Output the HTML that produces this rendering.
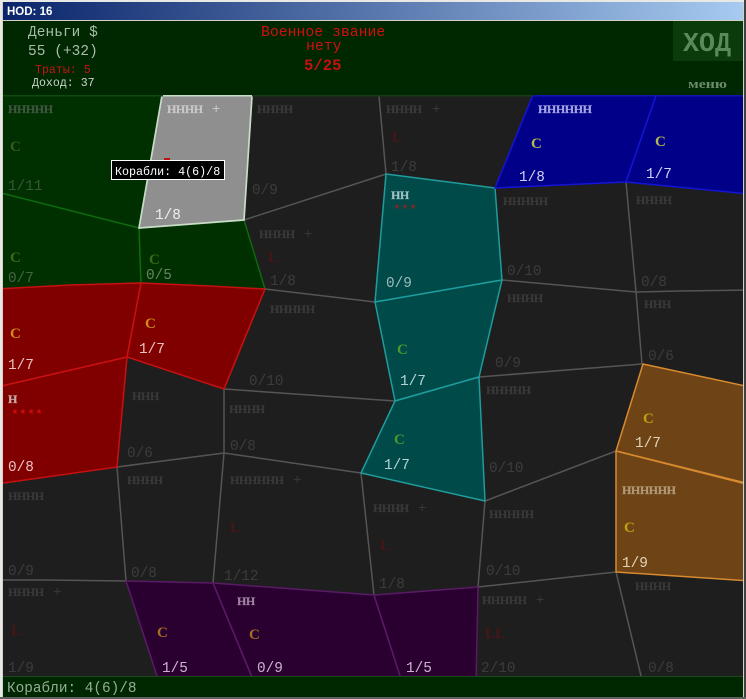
<!DOCTYPE html>
<html><head><meta charset="utf-8"><style>
html,body{margin:0;padding:0;background:#d4d0c8;width:746px;height:699px;overflow:hidden}
svg{display:block}
text{white-space:pre}
.m{font-family:"Liberation Mono",monospace;font-size:14.4px}
.h{font-family:"Liberation Serif",serif;font-weight:bold;font-size:12px;letter-spacing:-.4px;fill:#383838;stroke:#383838;stroke-width:.25px}
.c{font-family:"Liberation Serif",serif;font-weight:bold;font-size:15px}
.l{font-family:"Liberation Serif",serif;font-weight:bold;font-size:15px;fill:#481616}
.p{font-family:"Liberation Mono",monospace;font-size:14px;fill:#383838}
</style></head><body>
<svg width="746" height="699" viewBox="0 0 746 699" xmlns="http://www.w3.org/2000/svg">
<defs>
<linearGradient id="t" x1="0" x2="1" y1="0" y2="0"><stop offset="0" stop-color="#0a246a"/><stop offset="1" stop-color="#a6caf0"/></linearGradient>
<clipPath id="mapclip"><rect x="3" y="96" width="740" height="581"/></clipPath>
</defs>
<rect width="746" height="699" fill="#d4d0c8"/>
<rect x="0" y="0" width="746" height="2" fill="#e8e8e4"/>
<rect x="0" y="0" width="2" height="699" fill="#e8e8e4"/>
<rect x="744" y="0" width="2" height="699" fill="#404040"/>
<rect x="0" y="697" width="746" height="2" fill="#606060"/>
<rect x="3" y="2" width="740" height="18" fill="url(#t)"/>
<text x="7" y="15" font-family="Liberation Sans,sans-serif" font-weight="bold" font-size="11.5" fill="#fff">HOD: 16</text>
<rect x="3" y="21" width="740" height="74" fill="#002800"/>
<rect x="3" y="95" width="740" height="582" fill="#1e1e1e"/>

<g stroke-width="1.5" stroke-linejoin="round" clip-path="url(#mapclip)">
<g fill="#003000" stroke="#0d6a0d">
<polygon points="-3,90 163,90 163,96 139,228 -3,192"/>
<polygon points="-3,192 139,228 141,283 -3,289"/>
<polygon points="139,228 244,220 265,289 141,283"/>
</g>
<g fill="none" stroke="#555">
<polyline points="252,96 244,220 386,174 379,96"/>
<polyline points="265,289 375,302"/>
<polyline points="224,389 395,401"/>
<polyline points="224,389 224,453 117,467"/>
<polyline points="224,453 361,473 374,595"/>
<polyline points="224,453 213,583"/>
<polyline points="117,467 126,581"/>
<polyline points="3,580 45,580 126,581"/>
<polyline points="502,280 636,292 680,291 750,290"/>
<polyline points="626,182 636,292 642,364"/>
<polyline points="479,377 642,364"/>
<polyline points="485,501 616,451"/>
<polyline points="485,501 478,587"/>
<polyline points="478,587 616,572 642,680"/>
</g>
<g fill="#800000" stroke="#c81010">
<polygon points="-3,387 127,357 117,467 -3,484"/>
<polygon points="-3,289 70,285 141,283 127,357 -3,387"/>
<polygon points="141,283 210,286 265,289 224,389 127,357"/>
</g>
<g fill="#2a0030" stroke="#5a1a66">
<polygon points="126,581 213,583 254,682 159,682"/>
<polygon points="213,583 374,595 402,682 254,682"/>
<polygon points="374,595 478,587 476,682 402,682"/>
</g>
<g fill="#004a4a" stroke="#1f9c9c">
<polygon points="386,174 495,188 502,280 375,302"/>
<polygon points="375,302 502,280 479,377 395,401"/>
<polygon points="395,401 479,377 485,501 361,473"/>
</g>
<g fill="#000088" stroke="#1414d8">
<polygon points="535,90 658,90 626,182 495,188"/>
<polygon points="658,90 750,90 750,194 626,182"/>
</g>
<g fill="#6e4416" stroke="#d88a30">
<polygon points="643,364 750,387 750,484 616,451"/>
<polygon points="616,451 750,485 750,581 616,572"/>
</g>
<polygon points="163,90 252,90 252,96 244,220 139,228" fill="#8f8f8f" stroke="#c8dcc8" stroke-width="1.7"/>
</g>
<rect x="3" y="95" width="160" height="1.5" fill="#0d4a0d"/>
<rect x="163" y="95" width="89" height="1.5" fill="#c8dcc8"/>
<rect x="252" y="95" width="281" height="1.5" fill="#1a3a1a"/>
<rect x="533" y="95" width="210" height="1.5" fill="#1414b0"/>

<!-- header -->
<rect x="673" y="21" width="70" height="40" fill="#0b3a0b"/>
<text x="683" y="51" font-family="Liberation Mono,monospace" font-weight="bold" font-size="27" textLength="48" lengthAdjust="spacingAndGlyphs" fill="#5a8a5a">ХОД</text>
<text x="688" y="88" font-family="Liberation Serif,serif" font-weight="bold" font-size="13" textLength="39" lengthAdjust="spacingAndGlyphs" fill="#6a8a6a">меню</text>
<text x="28" y="36" class="m" fill="#a8bca8" letter-spacing=".1">Деньги $</text>
<text x="28" y="55" class="m" fill="#a8bca8" letter-spacing=".1">55 (+32)</text>
<text x="35" y="73" font-family="Liberation Mono,monospace" font-size="11.6" fill="#c81414">Траты: 5</text>
<text x="32" y="86" font-family="Liberation Mono,monospace" font-size="11.6" fill="#c8d4c8">Доход: 37</text>
<text x="261" y="36" font-family="Liberation Mono,monospace" font-size="14.8" fill="#d01010">Военное звание</text>
<text x="306" y="50" font-family="Liberation Mono,monospace" font-size="14.8" fill="#d01010">нету</text>
<text x="304" y="70" font-family="Liberation Mono,monospace" font-weight="bold" font-size="15.6" fill="#c81010">5/25</text>

<!-- H labels -->
<text x="8" y="113" class="h" style="fill:#3f553f;stroke:#3f553f">ННННН</text>
<text x="167" y="113" class="h" style="fill:#c8c8c8;stroke:#c8c8c8">НННН</text>
<text x="257" y="113" class="h">НННН</text>
<text x="386" y="113" class="h">НННН</text>
<text x="538" y="113" class="h" style="fill:#a4a4e4;stroke:#a4a4e4">НННННН</text>
<text x="391" y="199" class="h" style="fill:#9cc0c0;stroke:#9cc0c0">НН</text>
<text x="503" y="205" class="h">ННННН</text>
<text x="636" y="204" class="h">НННН</text>
<text x="259" y="238" class="h">НННН</text>
<text x="270" y="313" class="h">ННННН</text>
<text x="507" y="302" class="h">НННН</text>
<text x="644" y="308" class="h">ННН</text>
<text x="132" y="400" class="h">ННН</text>
<text x="229" y="413" class="h">НННН</text>
<text x="8" y="403" class="h" style="fill:#c8a8a8;stroke:#c8a8a8">Н</text>
<text x="486" y="394" class="h">ННННН</text>
<text x="127" y="484" class="h">НННН</text>
<text x="230" y="484" class="h">НННННН</text>
<text x="8" y="500" class="h">НННН</text>
<text x="373" y="512" class="h">НННН</text>
<text x="489" y="518" class="h">ННННН</text>
<text x="622" y="494" class="h" style="fill:#b09878;stroke:#b09878">НННННН</text>
<text x="635" y="590" class="h">НННН</text>
<text x="8" y="596" class="h">НННН</text>
<text x="237" y="605" class="h" style="fill:#a080a0;stroke:#a080a0">НН</text>
<text x="482" y="604" class="h">ННННН</text>
<!-- plus -->
<text x="212" y="113" class="p" style="fill:#c8c8c8">+</text>
<text x="432" y="113" class="p">+</text>
<text x="304" y="238" class="p">+</text>
<text x="293" y="484" class="p">+</text>
<text x="418" y="512" class="p">+</text>
<text x="53" y="596" class="p">+</text>
<text x="536" y="604" class="p">+</text>
<!-- stars -->
<text x="393" y="214" font-family="Liberation Mono,monospace" font-size="13.4" fill="#a02020">***</text>
<text x="11" y="419" font-family="Liberation Mono,monospace" font-size="13.4" fill="#e01010">****</text>

<!-- C labels -->
<text x="10" y="151" class="c" fill="#3a5a1a">С</text>
<text x="10" y="262" class="c" fill="#3a6a1a">С</text>
<text x="149" y="264" class="c" fill="#3a6a1a">С</text>
<text x="10" y="338" class="c" fill="#d08a20">С</text>
<text x="145" y="328" class="c" fill="#d08a20">С</text>
<text x="531" y="148" class="c" fill="#b8b850">С</text>
<text x="655" y="146" class="c" fill="#b8b850">С</text>
<text x="397" y="354" class="c" fill="#4a9a2a">С</text>
<text x="394" y="444" class="c" fill="#4a9a2a">С</text>
<text x="643" y="423" class="c" fill="#c0a010">С</text>
<text x="624" y="532" class="c" fill="#c0a010">С</text>
<text x="157" y="637" class="c" fill="#a07020">С</text>
<text x="249" y="639" class="c" fill="#a07020">С</text>

<!-- L labels -->
<text x="392" y="142" class="l">L</text>
<text x="268" y="262" class="l">L</text>
<text x="230" y="532" class="l">L</text>
<text x="380" y="550" class="l">L</text>
<text x="11" y="635" class="l">L</text>
<text x="485" y="638" class="l">LL</text>

<!-- numbers -->
<text x="8" y="190" class="m" fill="#3a563a">1/11</text>
<text x="155" y="219" class="m" fill="#eeeeee">1/8</text>
<text x="252" y="194" class="m" fill="#3c3c3c">0/9</text>
<text x="391" y="171" class="m" fill="#3c3c3c">1/8</text>
<text x="519" y="181" class="m" fill="#d0d0f0">1/8</text>
<text x="646" y="178" class="m" fill="#d0d0f0">1/7</text>
<text x="8" y="282" class="m" fill="#446444">0/7</text>
<text x="146" y="279" class="m" fill="#648464">0/5</text>
<text x="270" y="285" class="m" fill="#3c3c3c">1/8</text>
<text x="8" y="369" class="m" fill="#eac0c0">1/7</text>
<text x="139" y="353" class="m" fill="#eac0c0">1/7</text>
<text x="249" y="385" class="m" fill="#3c3c3c">0/10</text>
<text x="127" y="457" class="m" fill="#3c3c3c">0/6</text>
<text x="230" y="450" class="m" fill="#3c3c3c">0/8</text>
<text x="8" y="471" class="m" fill="#eac0c0">0/8</text>
<text x="386" y="287" class="m" fill="#9cbcbc">0/9</text>
<text x="507" y="275" class="m" fill="#3c3c3c">0/10</text>
<text x="641" y="286" class="m" fill="#3c3c3c">0/8</text>
<text x="400" y="385" class="m" fill="#b4d4d4">1/7</text>
<text x="495" y="367" class="m" fill="#3c3c3c">0/9</text>
<text x="648" y="360" class="m" fill="#3c3c3c">0/6</text>
<text x="384" y="469" class="m" fill="#b4d4d4">1/7</text>
<text x="635" y="447" class="m" fill="#e4d4b8">1/7</text>
<text x="489" y="472" class="m" fill="#3c3c3c">0/10</text>
<text x="8" y="575" class="m" fill="#3c3c3c">0/9</text>
<text x="131" y="577" class="m" fill="#3c3c3c">0/8</text>
<text x="224" y="580" class="m" fill="#3c3c3c">1/12</text>
<text x="379" y="588" class="m" fill="#3c3c3c">1/8</text>
<text x="486" y="575" class="m" fill="#3c3c3c">0/10</text>
<text x="622" y="567" class="m" fill="#e4d4b8">1/9</text>
<text x="8" y="672" class="m" fill="#3c3c3c">1/9</text>
<text x="162" y="672" class="m" fill="#ccb4d0">1/5</text>
<text x="257" y="672" class="m" fill="#ccb4d0">0/9</text>
<text x="406" y="672" class="m" fill="#ccb4d0">1/5</text>
<text x="481" y="672" class="m" fill="#3c3c3c">2/10</text>
<text x="648" y="672" class="m" fill="#3c3c3c">0/8</text>

<!-- status bar -->
<rect x="3" y="677" width="740" height="20" fill="#002800"/>
<rect x="3" y="676" width="740" height="1" fill="#1a4a1a"/>
<text x="7" y="692" class="m" fill="#96ac96">Корабли: 4(6)/8</text>

<!-- tooltip -->
<rect x="164" y="158" width="6" height="3" fill="#c01010"/>
<rect x="111.5" y="160.5" width="113" height="19" fill="#000" stroke="#fff" stroke-width="1"/>
<text x="115" y="175" font-family="Liberation Mono,monospace" font-size="11.7" fill="#fff">Корабли: 4(6)/8</text>
</svg>
</body></html>
